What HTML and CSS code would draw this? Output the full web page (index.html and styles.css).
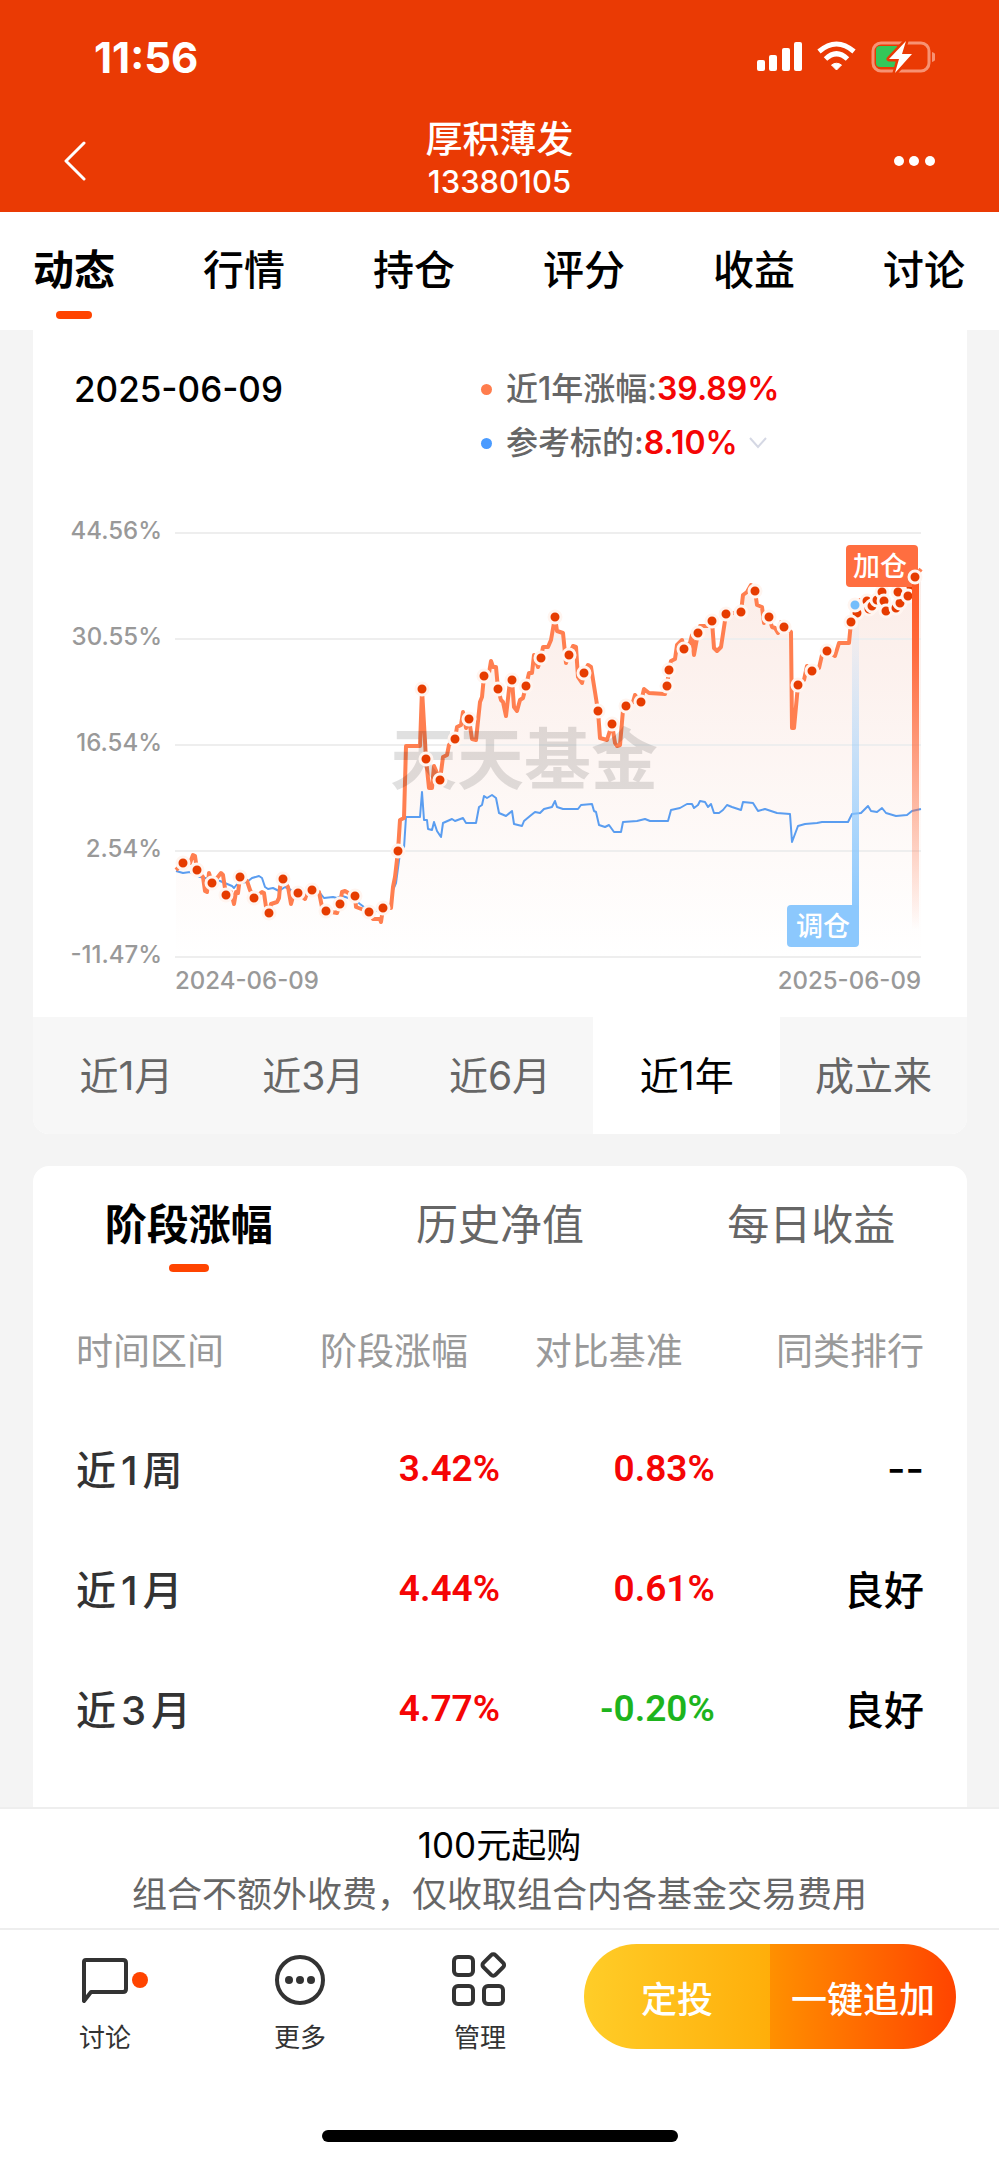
FILE: index.html
```html
<!DOCTYPE html>
<html lang="zh-CN">
<head>
  <meta charset="UTF-8">
  <meta name="viewport" content="width=device-width, initial-scale=1">
  <title>厚积薄发</title>
  <link rel="stylesheet" href="styles.css">
</head>
<body>
  <header class="header">
    <div class="status-bar">
      <span class="clock">11:56</span>
      <svg class="status-icons" width="180" height="32" viewBox="0 0 180 32">
        <g fill="#fff">
          <rect x="2" y="19" width="8" height="11" rx="2"/>
          <rect x="14" y="14" width="8" height="16" rx="2"/>
          <rect x="27" y="7" width="8" height="23" rx="2"/>
          <rect x="39" y="1" width="8" height="29" rx="2"/>
          <path d="M81.5 29 L76.5 24 Q81.5 20.5 86.5 24 Z" stroke="#fff" stroke-linejoin="round"/>
        </g>
        <g fill="none" stroke="#fff" stroke-width="5">
          <path d="M64 10.5 Q81.5 -4.5 99 10.5"/>
          <path d="M70.5 18 Q81.5 7.5 92.5 18"/>
        </g>
        <rect x="118" y="2" width="56" height="28" rx="8" fill="none" stroke="#f79273" stroke-width="3"/>
        <path d="M177 11 q4 1 4 5 t-4 5z" fill="#f79273"/>
        <path d="M125 5 H142 V26 H125 q-4 0 -4 -4 V9 q0 -4 4 -4z" fill="#34c759"/>
        <path d="M151 0 L134 18 H144 L140 32 L157 13 H147 L151 0z" fill="#fff" stroke="#ea3a04" stroke-width="5" paint-order="stroke" stroke-linejoin="round"/>
      </svg>
    </div>
    <div class="title-bar">
      <button class="back" aria-label="返回">
        <svg width="24" height="40" viewBox="0 0 24 40"><path d="M22 2 L4 20 L22 38" fill="none" stroke="#fff" stroke-width="3" stroke-linecap="round" stroke-linejoin="round"/></svg>
      </button>
      <div class="title">
        <h1>厚积薄发</h1>
        <p>13380105</p>
      </div>
      <button class="menu" aria-label="菜单">
        <svg width="44" height="12" viewBox="0 0 44 12" fill="#fff"><circle cx="6" cy="6" r="5"/><circle cx="21" cy="6" r="5"/><circle cx="37" cy="6" r="5"/></svg>
      </button>
    </div>
  </header>

  <nav class="main-tabs">
    <a href="#" class="active">动态</a>
    <a href="#">行情</a>
    <a href="#">持仓</a>
    <a href="#">评分</a>
    <a href="#">收益</a>
    <a href="#">讨论</a>
  </nav>

  <main class="content">
    <section class="card chart-card">
      <div class="chart-head">
        <time class="date">2025-06-09</time>
        <div class="legend">
          <div class="legend-row"><i class="dot orange"></i>近1年涨幅:<b>39.89%</b></div>
          <button class="legend-row"><i class="dot blue"></i>参考标的:<b>8.10%</b>
            <svg class="chevron" width="20" height="14" viewBox="0 0 20 14"><path d="M2 2 L10 11 L18 2" fill="none" stroke="#d5d8e4" stroke-width="2"/></svg>
          </button>
        </div>
      </div>

      <svg class="chart" viewBox="33 500 934 517">
        <defs>
          <linearGradient id="areaFill" gradientUnits="userSpaceOnUse" x1="0" y1="560" x2="0" y2="957">
            <stop offset="0" stop-color="#fbece7"/>
            <stop offset="1" stop-color="#fff"/>
          </linearGradient>
          <linearGradient id="addBar" x1="0" y1="0" x2="0" y2="1">
            <stop offset="0" stop-color="#ff5722"/>
            <stop offset="0.2" stop-color="#ff6a3c"/>
            <stop offset="1" stop-color="#ff6a3c" stop-opacity="0"/>
          </linearGradient>
          <linearGradient id="moveBar" x1="0" y1="0" x2="0" y2="1">
            <stop offset="0" stop-color="#8cc8fd" stop-opacity="0"/>
            <stop offset="1" stop-color="#8cc8fd"/>
          </linearGradient>
        </defs>
        <polygon id="area" fill="url(#areaFill)"/>
        <g id="grid"></g>
        <polyline id="baseLine" class="base-line"/>
        <polyline id="fundLine" class="fund-line"/>
        <text class="watermark" x="390" y="784">天天基金</text>
        <rect x="852" y="610" width="7" height="300" fill="url(#moveBar)"/>
        <g id="dots"></g>
        <rect x="787" y="905" width="72" height="42" rx="4" fill="#8cc8fd"/>
        <text class="tag" x="823" y="936">调仓</text>
        <rect x="846" y="545" width="72" height="42" rx="4" fill="#ff6e40"/>
        <text class="tag" x="880" y="576">加仓</text>
        <rect x="912" y="580" width="7" height="350" fill="url(#addBar)"/>
        <circle class="point" cx="915" cy="577" r="6"/>
        <circle class="point move" cx="855" cy="605" r="6"/>
        <text class="axis" x="175" y="989">2024-06-09</text>
        <text class="axis end" x="921" y="989">2025-06-09</text>
      </svg>

      <div class="periods">
        <button>近1月</button>
        <button>近3月</button>
        <button>近6月</button>
        <button class="active">近1年</button>
        <button>成立来</button>
      </div>
    </section>

    <section class="card stage-card">
      <div class="sub-tabs">
        <button class="active">阶段涨幅</button>
        <button>历史净值</button>
        <button>每日收益</button>
      </div>
      <table class="stage-table">
        <thead>
          <tr><th>时间区间</th><th>阶段涨幅</th><th>对比基准</th><th>同类排行</th></tr>
        </thead>
        <tbody>
          <tr><td>近1周</td><td class="up">3.42%</td><td class="up">0.83%</td><td>--</td></tr>
          <tr><td>近1月</td><td class="up">4.44%</td><td class="up">0.61%</td><td>良好</td></tr>
          <tr><td>近3月</td><td class="up">4.77%</td><td class="down">-0.20%</td><td>良好</td></tr>
        </tbody>
      </table>
    </section>
  </main>

  <footer class="footer">
    <div class="notice">
      <p class="notice-min">100元起购</p>
      <p>组合不额外收费，仅收取组合内各基金交易费用</p>
    </div>
    <div class="action-bar">
      <nav class="actions">
        <a href="#">
          <span class="icon-wrap">
            <svg width="56" height="56" viewBox="0 0 56 56" fill="none" stroke="#333" stroke-width="4" stroke-linejoin="round"><path d="M9 8 H46 Q49 8 49 11 V37 Q49 40 46 40 H14 L7 49 V10 Q7 8 9 8z"/></svg>
            <i class="badge"></i>
          </span>
          讨论
        </a>
        <a href="#">
          <svg width="56" height="56" viewBox="0 0 56 56"><circle cx="28" cy="28" r="23" fill="none" stroke="#333" stroke-width="4"/><g fill="#333"><circle cx="17" cy="28" r="4"/><circle cx="28" cy="28" r="4"/><circle cx="39" cy="28" r="4"/></g></svg>
          更多
        </a>
        <a href="#">
          <svg width="56" height="56" viewBox="0 0 56 56" fill="none" stroke="#333" stroke-width="4">
            <rect x="2" y="5" width="19" height="18" rx="4"/>
            <rect x="2" y="34" width="19" height="18" rx="4"/>
            <rect x="32" y="34" width="19" height="18" rx="4"/>
            <rect x="33" y="5" width="17" height="17" rx="3" transform="rotate(45 42 13)"/>
          </svg>
          管理
        </a>
      </nav>
      <div class="buy">
        <button class="plan">定投</button>
        <button class="append">一键追加</button>
      </div>
    </div>
    <div class="home-indicator"></div>
  </footer>

  <script>
    const NS = 'http://www.w3.org/2000/svg';

    const fund = '176,870 183,863 190,863 193,855 195,856 197,870 203,877 205,891 207,892 209,873 212,883 217,878 221,873 223,875 226,895 231,892 234,904 236,892 238,893 240,877 247,881 250,890 254,898 262,892 264,893 266,907 269,913 271,904 277,902 279,898 280,887 283,879 288,887 291,904 294,893 298,893 305,899 307,893 312,890 319,892 322,907 326,911 337,913 340,904 342,892 345,891 350,894 355,896 356,907 364,910 369,912 373,919 380,919 381,922 383,908 391,908 393,887 395,877 398,851 400,820 404,818 406,746 420,746 422,689 426,759 429,788 432,788 434,766 440,780 443,757 447,755 449,745 455,739 457,727 461,725 463,712 466,728 469,719 472,739 476,740 480,702 482,697 484,676 489,673 491,661 493,667 496,667 498,689 501,700 503,702 506,716 510,681 512,680 514,707 517,711 520,700 523,698 526,686 529,673 532,673 534,655 538,667 541,658 543,647 548,647 551,640 555,617 557,631 563,633 566,663 569,655 573,646 576,647 578,677 582,683 584,673 588,665 591,667 595,692 598,711 600,738 607,740 612,724 615,743 617,746 620,745 623,710 626,706 633,702 635,695 641,702 644,689 649,693 665,694 667,686 669,670 671,661 675,659 677,645 682,640 684,649 690,643 692,635 694,655 698,633 700,626 707,626 712,621 714,648 717,651 721,647 726,614 741,612 743,595 747,592 751,585 755,591 757,605 762,607 764,623 769,617 772,627 775,628 778,633 781,622 784,627 791,632 792,728 794,728 798,685 804,680 807,666 812,671 819,668 822,655 827,651 835,656 839,643 849,643 851,622 857,613 860,600 867,600 870,609 877,600 880,588 884,601 886,611 896,608 898,592 908,596 911,587 915,577 921,569';
    const base = '176,871 183,873 190,872 200,877 220,881 232,886 234,888 238,883 247,882 252,878 259,876 262,878 265,887 268,889 273,888 279,891 285,887 297,893 307,895 320,893 324,898 333,897 337,898 342,896 355,900 360,904 364,907 377,911 390,909 393,890 396,883 400,853 404,848 406,817 420,817 422,792 424,820 427,820 428,829 432,830 434,822 437,831 441,837 443,823 452,819 455,821 463,818 466,823 476,823 479,807 482,805 484,796 487,798 492,795 496,798 499,813 506,816 512,811 514,824 522,826 524,821 530,816 535,812 540,813 544,809 552,807 555,801 557,807 563,809 578,809 581,805 592,804 594,811 596,812 599,825 605,827 609,825 614,832 621,832 623,822 637,821 645,819 650,821 668,821 671,810 680,808 687,804 692,804 694,808 698,805 700,801 705,802 708,807 711,804 714,813 719,813 723,810 727,805 732,807 741,810 743,802 753,803 758,811 765,809 777,813 790,814 792,842 798,826 805,824 817,823 822,822 848,822 852,814 861,813 868,806 871,811 877,812 882,808 886,813 896,816 907,815 912,811 921,809';
    const points = '183,863 197,870 212,883 226,895 240,877 254,898 269,913 283,879 298,893 312,890 326,911 340,904 355,896 369,912 383,908 398,851 422,689 426,759 440,780 455,739 469,719 484,676 498,689 512,680 526,686 541,658 555,617 569,655 584,673 598,711 612,724 626,706 641,702 667,686 669,670 684,649 698,633 712,621 726,614 741,612 755,591 769,617 784,627 798,685 812,671 827,651 857,613 851,622 867,601 869,609 872,606 877,600 882,592 884,601 886,611 896,608 900,603 898,592 911,587 908,596';
    const levels = ['44.56%', '30.55%', '16.54%', '2.54%', '-11.47%'];

    function add(parent, tag, attrs, text) {
      const el = document.createElementNS(NS, tag);
      for (const key in attrs) el.setAttribute(key, attrs[key]);
      if (text) el.textContent = text;
      parent.appendChild(el);
    }

    document.getElementById('fundLine').setAttribute('points', fund);
    document.getElementById('baseLine').setAttribute('points', base);
    document.getElementById('area').setAttribute('points', fund + ' 921,957 176,957');

    const grid = document.getElementById('grid');
    levels.forEach((label, i) => {
      const y = 533 + i * 106;
      add(grid, 'line', { x1: 175, x2: 921, y1: y, y2: y });
      add(grid, 'text', { class: 'axis end', x: 162, y: y + 6 }, label);
    });

    const dots = document.getElementById('dots');
    points.split(' ').forEach(p => {
      const [x, y] = p.split(',');
      add(dots, 'circle', { class: 'point', cx: x, cy: y, r: 6 });
    });
  </script>
</body>
</html>
```
FILE: styles.css
```css
* {
  box-sizing: border-box;
}

body {
  margin: 0;
  min-height: 100vh;
  display: flex;
  flex-direction: column;
  background: #f4f4f4;
  color: #000;
  font-family: Inter, "Noto Sans CJK SC", sans-serif;
}

h1, p {
  margin: 0;
}

button {
  border: none;
  padding: 0;
  background: none;
  font: inherit;
  color: inherit;
  cursor: pointer;
}

a {
  color: inherit;
  text-decoration: none;
}

svg {
  display: block;
}

/* header */
.header {
  background: #ea3a04;
  color: #fff;
}

.status-bar {
  height: 114px;
  padding: 0 64px 0 94px;
  display: flex;
  align-items: center;
  justify-content: space-between;
}

.clock {
  font-size: 42px;
  font-weight: 700;
}

.title-bar {
  height: 98px;
  padding: 0 62px 4px;
  display: grid;
  grid-template-columns: 1fr auto 1fr;
  align-items: center;
}

.title {
  padding-bottom: 4px;
  text-align: center;
}

.title h1 {
  font-size: 37px;
  line-height: 46px;
  font-weight: 500;
}

.title p {
  font-size: 31px;
  line-height: 38px;
  font-weight: 500;
}

.menu {
  justify-self: end;
}

/* top tabs */
.main-tabs {
  height: 118px;
  padding: 0 34px 0 33px;
  display: flex;
  justify-content: space-between;
  background: #fff;
  font-size: 41px;
  font-weight: 500;
}

.main-tabs a {
  line-height: 116px;
  position: relative;
}

.main-tabs .active {
  font-weight: 700;
}

.main-tabs .active::after,
.sub-tabs .active::after {
  content: "";
  position: absolute;
  left: 50%;
  bottom: 11px;
  width: 36px;
  height: 8px;
  margin-left: -18px;
  border-radius: 4px;
  background: #ff4400;
}

/* cards */
.content {
  flex: 1;
  padding: 0 32px 0 33px;
  display: flex;
  flex-direction: column;
  gap: 32px;
}

.card {
  background: #fff;
  overflow: hidden;
}

.chart-card {
  border-radius: 0 0 16px 16px;
}

.chart-head {
  height: 170px;
  padding: 32px 41px 0;
  display: grid;
  grid-template-columns: 407px 1fr;
  align-items: start;
}

.date {
  font-size: 35px;
  line-height: 54px;
  font-weight: 500;
}

.legend {
  color: #666;
  font-size: 32px;
}

.legend-row {
  display: flex;
  align-items: center;
  line-height: 54px;
  font-weight: 500;
}

.legend b {
  color: #f50505;
  font-weight: 600;
}

.dot {
  width: 11px;
  height: 11px;
  margin-right: 14px;
  border-radius: 50%;
}

.dot.orange {
  background: #ff7d4d;
}

.dot.blue {
  background: #4a9bff;
}

.chevron {
  margin-left: 10px;
}

.chart {
  width: 100%;
}

.chart line {
  stroke: #eee;
  stroke-width: 2;
}

.fund-line,
.base-line {
  fill: none;
  stroke: #ff7f50;
  stroke-width: 4;
  stroke-linejoin: round;
}

.base-line {
  stroke: #5a9df0;
  stroke-width: 2;
}

.point {
  fill: #e63c00;
  stroke: #fff5f0;
  stroke-width: 3;
}

.point.move {
  fill: #74bdfb;
}

.axis {
  fill: #999;
  font-size: 24px;
  font-weight: 500;
}

.axis.end {
  text-anchor: end;
}

.tag {
  fill: #fff;
  font-size: 27px;
  font-weight: 500;
  text-anchor: middle;
}

.watermark {
  fill: #000;
  fill-opacity: 0.12;
  font-family: "Noto Sans CJK SC", sans-serif;
  font-size: 67px;
  font-weight: 700;
}

.periods {
  display: grid;
  grid-template-columns: repeat(5, 1fr);
  background: #f7f7f7;
  color: #666;
  font-size: 39px;
}

.periods button {
  height: 117px;
  padding-bottom: 6px;
}

.periods .active {
  background: #fff;
  color: #000;
}

/* stage table */
.stage-card {
  flex: 1;
  border-radius: 16px 16px 0 0;
}

.sub-tabs {
  display: grid;
  grid-template-columns: repeat(3, 1fr);
  color: #666;
  font-size: 42px;
}

.sub-tabs button {
  height: 117px;
  padding-bottom: 6px;
  position: relative;
}

.sub-tabs .active {
  color: #000;
  font-weight: 700;
}

.sub-tabs .active::after {
  width: 40px;
  margin-left: -20px;
}

.stage-table {
  width: 100%;
  border-collapse: collapse;
  table-layout: fixed;
}

.stage-table th,
.stage-table td {
  padding: 0;
  text-align: right;
  font-weight: 500;
}

.stage-table th {
  height: 125px;
  padding-top: 6px;
  color: #999;
  font-size: 37px;
  font-weight: 400;
}

.stage-table td {
  height: 120px;
  font-size: 40px;
}

.stage-table tr > :first-child {
  width: 25%;
  padding-left: 43px;
  text-align: left;
  color: #333;
}

.stage-table th:first-child {
  color: #999;
}

.stage-table tr > :nth-child(2) {
  width: 25%;
}

.stage-table tr > :nth-child(3) {
  width: 23%;
}

.stage-table th:nth-child(2),
.stage-table th:nth-child(3) {
  padding-right: 32px;
}

.stage-table tr > :last-child {
  padding-right: 43px;
}

.stage-table td:first-child {
  text-autospace: normal;
}

.stage-table .up,
.stage-table .down {
  font-family: Roboto, sans-serif;
  font-size: 37px;
  font-weight: 600;
  color: #f50505;
}

.stage-table .down {
  color: #1db41d;
}

/* footer */
.footer {
  background: #fff;
}

.notice {
  height: 123px;
  padding-top: 12px;
  border-top: 2px solid #eee;
  border-bottom: 2px solid #eee;
  text-align: center;
  font-size: 35px;
  line-height: 49px;
  color: #666;
}

.notice-min {
  color: #000;
}

.action-bar {
  padding: 14px 43px 0 0;
  display: flex;
}

.actions {
  flex: 1;
  padding-right: 14px;
  display: grid;
  grid-template-columns: 7fr 6fr 6fr;
  font-size: 26px;
  line-height: 38px;
  color: #333;
}

.actions a {
  display: flex;
  flex-direction: column;
  align-items: center;
  gap: 11px;
  padding-top: 8px;
}

.icon-wrap {
  position: relative;
}

.badge {
  position: absolute;
  right: -15px;
  top: 20px;
  width: 16px;
  height: 16px;
  border-radius: 50%;
  background: #ff4400;
}

.buy {
  width: 372px;
  height: 105px;
  display: grid;
  grid-template-columns: 1fr 1fr;
  border-radius: 53px;
  overflow: hidden;
  color: #fff;
  font-size: 36px;
  font-weight: 500;
}

.plan {
  background: linear-gradient(to right, #ffcd28, #ffae0a);
}

.append {
  background: linear-gradient(to right, #ff9000, #ff4400);
}

.home-indicator {
  width: 356px;
  height: 12px;
  margin: 73px auto 19px;
  border-radius: 6px;
  background: #000;
}
```
